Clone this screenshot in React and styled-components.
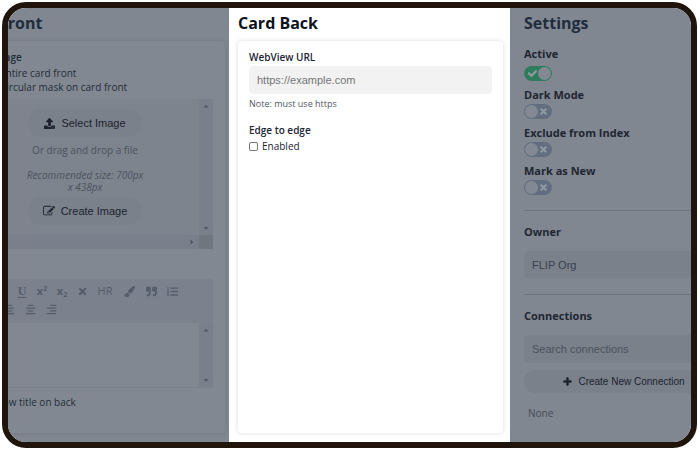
import React from 'react';
import styled, { createGlobalStyle, css } from 'styled-components';
import {
  FaUpload, FaTimes, FaPaintBrush, FaQuoteRight, FaListOl, FaAlignCenter,
  FaAlignRight, FaPlus, FaCheck, FaCaretUp, FaCaretDown, FaCaretRight,
} from 'react-icons/fa';

const ui = '"Open Sans", "Noto Sans", sans-serif';
const control = '"Liberation Sans", Arial, sans-serif';

const GlobalStyle = createGlobalStyle`
  *, *::before, *::after { box-sizing: border-box; }
  body { margin: 0; background: #fff; font: 10px/14px ${ui}; color: #1f2937; }
  button, input, select { font: 11px/14px ${control}; margin: 0; }
  h2, h3, p, fieldset { margin: 0; padding: 0; border: 0; }
`;

const Frame = styled.main`
  display: grid;
  grid-template-columns: minmax(0, 221fr) minmax(0, 281fr) minmax(0, 181fr);
  min-height: calc(100vh - 4px);
  margin: 2px 3px 2px 2px;
  border: 6px solid #20150d;
  border-radius: 24px;
  overflow: hidden;
`;

const Column = styled.section`
  display: flex;
  flex-direction: column;
  overflow: hidden;
  padding: 4px 7px 9px 9px;
  background: ${p => (p.$dim ? '#808791' : '#fff')};
  color: ${p => (p.$dim ? '#242d3a' : '#1c2433')};
`;

const FrontColumn = styled(Column)`
  align-items: flex-end;
  padding: 4px 4px 9px 0;
`;

const FrontContent = styled.div`
  flex: 1;
  display: flex;
  flex-direction: column;
  width: 260px;
`;

const SettingsColumn = styled(Column)`
  padding: 4px 0 9px 14px;
`;

const Title = styled.h2`
  font-size: 16px;
  line-height: 22px;
  font-weight: 700;
  color: ${p => (p.$dim ? '#212c3c' : '#0b1220')};
  padding-left: ${p => (p.$indent ? '34px' : 0)};
`;

const Card = styled.div`
  flex: 1;
  margin-top: 7px;
  padding: 9px ${p => (p.$dim ? '12px' : '11px')} 9px 11px;
  border-radius: 4px;
  background: ${p => (p.$dim ? '#818891' : '#fff')};
  box-shadow: 0 0 5px ${p => (p.$dim ? 'rgba(60, 68, 80, 0.2)' : 'rgba(0, 0, 0, 0.14)')};
`;

const FieldLabel = styled.label`
  display: block;
  font-weight: 600;
  font-size: 10px;
  line-height: 14px;
  padding-left: ${p => (p.$indent ? '16px' : 0)};
`;

const Choice = styled.label`
  display: flex;
  align-items: center;
  gap: 4px;
  line-height: 14px;
  padding-left: ${p => p.$indent || 0}px;
`;

const Tick = styled.input`
  appearance: none;
  width: 9px;
  height: 9px;
  border: 1px solid #777;
  border-radius: ${p => (p.type === 'radio' ? '50%' : '2px')};
  &:checked { background: #4b5563; }
`;

const Options = styled.fieldset`
  margin-top: 2px;
  display: flex;
  flex-direction: column;
`;

const TextField = styled.input`
  display: block;
  width: 100%;
  height: 28px;
  margin-top: 2px;
  padding: 0 8px;
  border: 0;
  border-radius: 5px;
  background: ${p => (p.$dim ? '#7a818b' : '#f2f2f2')};
  color: #39424f;
  &::placeholder { color: ${p => (p.$dim ? '#4a535f' : '#757575')}; opacity: 1; }
`;

const Note = styled.p`
  margin: 3px 0 12px;
  font-size: 9px;
  line-height: 14px;
  color: #4f5763;
`;

const ImageBox = styled.div`
  display: grid;
  grid-template-columns: 1fr 14px;
  grid-template-rows: auto 14px;
  margin-top: 5px;
  background: #7d848e;
`;

const Drop = styled.div`
  display: flex;
  flex-direction: column;
  align-items: center;
  padding: 10px 54px 10px 0;
  margin-left: auto;
  color: #4a535f;
  text-align: center;
`;

const Hint = styled.p`
  width: 120px;
  line-height: 12px;
  ${p => p.$italic && css`font-style: italic; margin: 13px 0 4px;`}
  ${p => !p.$italic && css`margin-top: 7px;`}
`;

const PillButton = styled.button`
  display: flex;
  align-items: center;
  justify-content: center;
  gap: 6px;
  min-width: 114px;
  height: 28px;
  border: 0;
  border-radius: 14px;
  background: #7a818b;
  color: #1c232f;
`;

const WideButton = styled(PillButton)`
  width: 200px;
  height: 23px;
  margin-top: 7px;
  font-size: 10px;
  svg { stroke: currentColor; stroke-width: 40px; width: 9px; height: 9px; }
`;

const EditIcon = styled.svg`
  width: 12px;
  height: 12px;
  fill: currentColor;
`;

const Track = styled.div`
  display: flex;
  flex-direction: ${p => (p.$row ? 'row' : 'column')};
  align-items: center;
  justify-content: ${p => (p.$row ? 'flex-end' : 'space-between')};
  padding: 3px;
  background: #7a808b;
  color: #515963;
  svg { display: block; width: 8px; height: 8px; }
`;

const Corner = styled.div`
  background: #70767f;
`;

const Toolbar = styled.div`
  height: 44px;
  margin-top: 30px;
  padding: 3px 0 0 21px;
  background: #7c828d;
`;

const ToolRow = styled.div`
  display: flex;
  padding-left: ${p => (p.$second ? '2px' : '15px')};
`;

const Tool = styled.button`
  flex: none;
  display: flex;
  align-items: center;
  justify-content: center;
  width: ${p => p.$width || 20}px;
  height: 18px;
  padding: 0;
  border: 0;
  background: none;
  color: #535d6b;
  font-family: ${ui};
  svg { width: 11px; height: 11px; }
`;

const UnderlineTool = styled(Tool)`
  font-family: "Liberation Serif", serif;
  font-size: 12px;
  font-weight: 700;
  text-decoration: underline;
  text-underline-offset: 2px;
`;

const ScriptTool = styled(Tool)`
  font-weight: 700;
  sup, sub { font-size: 7px; line-height: 7px; }
  sup { align-self: flex-start; margin-top: 3px; }
  sub { align-self: flex-end; margin-bottom: 2px; }
`;

const Editor = styled.div`
  display: flex;
  justify-content: flex-end;
  height: 65px;
  margin-bottom: 7px;
  border-bottom: 1px solid #7b828c;
`;

const SettingGroup = styled.div`
  display: flex;
  flex-direction: column;
  align-items: flex-start;
  gap: ${p => (p.$first ? '5px' : '2px')};
  margin-top: ${p => (p.$first ? '12px' : '6px')};
`;

const SettingLabel = styled.label`
  font-weight: 700;
  font-size: 11px;
  line-height: 15px;
  color: #1e2631;
`;

const SwitchBox = styled.span`
  display: flex;
  align-items: center;
  position: relative;
`;

const SwitchInput = styled.input`
  appearance: none;
  display: flex;
  width: 28px;
  height: 15px;
  padding: 1px;
  border-radius: 8px;
  background: #626e7f;
  &::before {
    content: '';
    width: 13px;
    height: 13px;
    border-radius: 50%;
    background: #828993;
  }
  &:checked { background: #2f7c5d; justify-content: flex-end; }
`;

const SwitchMark = styled.span`
  position: absolute;
  top: 3px;
  ${p => (p.$on ? 'left: 4px;' : 'right: 4px;')}
  color: #929aa4;
  pointer-events: none;
  svg { display: block; width: 9px; height: 9px; stroke: currentColor; stroke-width: 40px; }
`;

const Rule = styled.hr`
  width: 100%;
  margin: 15px 0 13px;
  border: 0;
  border-top: 1px solid #6c747f;
`;

const Select = styled.select`
  appearance: none;
  width: 100%;
  height: 28px;
  margin-top: 12px;
  padding: 0 8px;
  border: 0;
  border-radius: 5px 0 0 5px;
  background: #7a818b;
  color: #39424f;
`;

const Search = styled(TextField)`
  margin-top: 12px;
  border-radius: 5px 0 0 5px;
`;

const Empty = styled.p`
  margin-top: 13px;
  padding-left: 4px;
  color: #444d59;
`;

function Switch({ id, label, on, first }) {
  return (
    <SettingGroup $first={first}>
      <SettingLabel htmlFor={id}>{label}</SettingLabel>
      <SwitchBox>
        <SwitchInput id={id} type="checkbox" role="switch" defaultChecked={on} />
        <SwitchMark $on={on}>{on ? <FaCheck /> : <FaTimes />}</SwitchMark>
      </SwitchBox>
    </SettingGroup>
  );
}

function VerticalTrack() {
  return <Track aria-hidden="true"><FaCaretUp /><FaCaretDown /></Track>;
}

function PencilSquare() {
  return (
    <EditIcon viewBox="0 0 1792 1792" aria-hidden="true">
      <path d="M888 1184l116-116-152-152-116 116v56h96v96h56zm440-720q-16-16-33 1l-350 350q-17 17-1 33t33-1l350-350q17-17 1-33zm80 594v190q0 119-84.5 203.5t-203.5 84.5h-832q-119 0-203.5-84.5t-84.5-203.5v-832q0-119 84.5-203.5t203.5-84.5h832q63 0 117 25 15 7 18 23 3 17-9 29l-49 49q-14 14-32 8-23-6-45-6h-832q-66 0-113 47t-47 113v832q0 66 47 113t113 47h832q66 0 113-47t47-113v-126q0-13 9-22l64-64q15-15 35-7t20 29zm-96-738l288 288-672 672h-288v-288zm444 132l-92 92-288-288 92-92q28-28 68-28t68 28l152 152q28 28 28 68t-28 68z" />
    </EditIcon>
  );
}

export default function App() {
  return (
    <>
      <GlobalStyle />
      <Frame>
        <FrontColumn $dim>
          <FrontContent>
            <Title $dim $indent>Front</Title>
            <Card $dim>
              <FieldLabel as="h3" $indent>Image</FieldLabel>
              <Options>
                <Choice $indent={11}><Tick type="radio" name="mask" defaultChecked />Entire card front</Choice>
                <Choice $indent={11}><Tick type="radio" name="mask" />Circular mask on card front</Choice>
              </Options>
              <ImageBox>
                <Drop>
                  <PillButton type="button"><FaUpload />Select Image</PillButton>
                  <Hint>Or drag and drop a file</Hint>
                  <Hint $italic>Recommended size: 700px x 438px</Hint>
                  <PillButton type="button"><PencilSquare />Create Image</PillButton>
                </Drop>
                <VerticalTrack />
                <Track $row aria-hidden="true"><FaCaretRight /></Track>
                <Corner />
              </ImageBox>
              <Toolbar role="toolbar" aria-label="Formatting">
                <ToolRow>
                  <UnderlineTool type="button" aria-label="Underline">U</UnderlineTool>
                  <ScriptTool type="button" aria-label="Superscript">x<sup>2</sup></ScriptTool>
                  <ScriptTool type="button" aria-label="Subscript">x<sub>2</sub></ScriptTool>
                  <Tool type="button" aria-label="Clear"><FaTimes /></Tool>
                  <Tool type="button" $width={26}>HR</Tool>
                  <Tool type="button" $width={22} aria-label="Brush"><FaPaintBrush /></Tool>
                  <Tool type="button" $width={22} aria-label="Quote"><FaQuoteRight /></Tool>
                  <Tool type="button" aria-label="Numbered list"><FaListOl /></Tool>
                </ToolRow>
                <ToolRow $second>
                  <Tool type="button" $width={21} aria-label="Align left"><FaAlignCenter /></Tool>
                  <Tool type="button" $width={21} aria-label="Align center"><FaAlignCenter /></Tool>
                  <Tool type="button" $width={21} aria-label="Align right"><FaAlignRight /></Tool>
                </ToolRow>
              </Toolbar>
              <Editor><VerticalTrack /></Editor>
              <Choice $indent={2}><Tick type="checkbox" />Show title on back</Choice>
            </Card>
          </FrontContent>
        </FrontColumn>

        <Column>
          <Title>Card Back</Title>
          <Card>
            <FieldLabel htmlFor="url">WebView URL</FieldLabel>
            <TextField id="url" type="url" placeholder="https://example.com" />
            <Note>Note: must use https</Note>
            <FieldLabel as="h3">Edge to edge</FieldLabel>
            <Options>
              <Choice><Tick type="checkbox" />Enabled</Choice>
            </Options>
          </Card>
        </Column>

        <SettingsColumn $dim>
          <Title $dim>Settings</Title>
          <Switch id="active" label="Active" on first />
          <Switch id="dark" label="Dark Mode" />
          <Switch id="exclude" label="Exclude from Index" />
          <Switch id="new" label="Mark as New" />
          <Rule />
          <SettingLabel htmlFor="owner">Owner</SettingLabel>
          <Select id="owner"><option>FLIP Org</option></Select>
          <Rule />
          <SettingLabel htmlFor="connections">Connections</SettingLabel>
          <Search $dim id="connections" type="search" placeholder="Search connections" />
          <WideButton type="button"><FaPlus />Create New Connection</WideButton>
          <Empty>None</Empty>
        </SettingsColumn>
      </Frame>
    </>
  );
}
